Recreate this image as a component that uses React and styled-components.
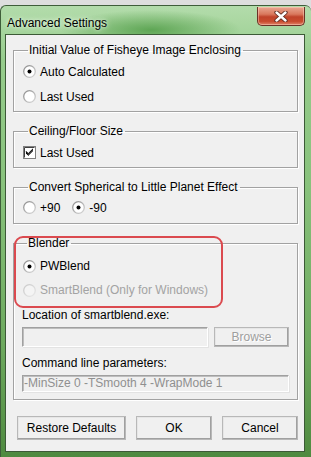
import React from "react";
import styled, { createGlobalStyle } from "styled-components";

const GlobalStyle = createGlobalStyle`
  html, body {
    margin: 0;
    padding: 0;
    background: #dedede;
  }
  body {
    font-family: "Liberation Sans", Arial, sans-serif;
    font-size: 12px;
    color: #000;
  }
`;

const Window = styled.div`
  box-sizing: border-box;
  width: 311px;
  height: 452px;
  margin-top: 5px;
  padding: 0 6px 5px 4px;
  display: flex;
  flex-direction: column;
  border: 1px solid #3f5e3a;
  border-bottom: none;
  border-right: none;
  border-radius: 6px 6px 0 0;
  background:
    radial-gradient(ellipse 90px 20px at 150px 24px, rgba(70, 150, 60, 0.75), rgba(70, 150, 60, 0) 100%),
    linear-gradient(to bottom, #b3dcab 0%, #96cc8c 12%, #88c27c 40%, #6da95e 75%, #4f8a40 100%);
`;

const TitleBar = styled.div`
  height: 28px;
  display: flex;
  justify-content: space-between;
  align-items: flex-start;
`;

const Title = styled.div`
  padding: 10px 0 0 2px;
  line-height: 14px;
  font-size: 12px;
  color: #000;
  text-shadow: 0 0 6px #e6f4e2, 0 0 3px #e6f4e2;
`;

const CloseButton = styled.div`
  box-sizing: border-box;
  margin-top: 1px;
  width: 48px;
  height: 19px;
  display: flex;
  align-items: center;
  justify-content: center;
  border: 1px solid #6b3226;
  border-top: none;
  border-radius: 0 0 5px 5px;
  background: linear-gradient(to bottom, #e9a893 0%, #d9785d 40%, #c0432a 55%, #c84c2e 80%, #e0856a 100%);
  box-shadow: inset 0 0 0 1px rgba(255, 220, 200, 0.45);
`;

const Client = styled.div`
  flex: 1;
  display: flex;
  flex-direction: column;
  background: #f0f0f0;
  border: 1px solid #3c5a37;
  padding: 8px 6px 0 7px;
`;

const GroupWrap = styled.div`
  position: relative;
  margin-top: ${(p) => p.$top || 0}px;
`;

const Group = styled.fieldset`
  margin: 0;
  padding: ${(p) => p.$pad || "2px 0 2px 9px"};
  border: 1px solid #a2a2a2;
  box-shadow: inset 1px 1px 0 #fff, 1px 1px 0 #fff;
  min-width: 0;
`;

const Legend = styled.legend`
  margin-left: 5px;
  padding: 0 2px 0 1px;
  line-height: 14px;
  color: #000;
`;

const Row = styled.div`
  display: flex;
  align-items: center;
  height: ${(p) => p.$h || 25}px;
  padding-top: ${(p) => p.$pt || 0}px;
  padding-left: ${(p) => p.$pl || 0}px;
  box-sizing: border-box;
`;

const Option = styled.label`
  display: flex;
  align-items: center;
  margin-right: ${(p) => p.$mr || 0}px;
  color: ${(p) => (p.$disabled ? "#a3a3a3" : "#000")};
`;

const Mark = styled.span`
  display: inline-flex;
  width: 13px;
  height: 13px;
  margin-right: 4px;
`;

const Caption = styled.div`
  line-height: 16px;
  margin-top: ${(p) => p.$top || 0}px;
`;

const FieldRow = styled.div`
  display: flex;
  gap: 6px;
  margin-top: 4px;
`;

const TextField = styled.div`
  box-sizing: border-box;
  flex: 1;
  height: ${(p) => p.$h || 20}px;
  margin-top: ${(p) => p.$top || 0}px;
  border: 1px solid;
  border-color: #a0a0a0 #fff #fff #a0a0a0;
  box-shadow: inset 1px 1px 0 #bdbdbd, 1px 1px 0 #e3e3e3;
  background: #f0f0f0;
  color: #8f8f8f;
  line-height: 14px;
  padding-left: 1px;
  white-space: nowrap;
  overflow: hidden;
`;

const Button = styled.div`
  box-sizing: border-box;
  width: ${(p) => p.$w}px;
  height: ${(p) => p.$h || 24}px;
  display: flex;
  align-items: center;
  justify-content: center;
  background: #f0f0f0;
  border: 1px solid;
  border-color: #fff #5c5c5c #5c5c5c #fff;
  box-shadow: inset -1px -1px 0 #a0a0a0, inset 1px 1px 0 #e6e6e6;
  outline: 1px solid #b8b8b8;
  outline-offset: -1px;
  color: ${(p) => (p.$disabled ? "#9e9e9e" : "#000")};
  text-shadow: ${(p) => (p.$disabled ? "1px 1px 0 #fff" : "none")};
`;

const ButtonBar = styled.div`
  display: flex;
  gap: 10px;
  margin: 16px 0 0 4px;
`;

const Highlight = styled.div`
  position: absolute;
  left: 1px;
  top: 0;
  width: 209px;
  height: 72px;
  box-sizing: border-box;
  border: 2px solid #db4a4f;
  border-radius: 9px;
  pointer-events: none;
`;

const Radio = ({ checked, disabled }) => (
  <Mark>
    <svg width="13" height="13" viewBox="0 0 13 13">
      <defs>
        <linearGradient id={disabled ? "rgd" : "rg"} x1="0" y1="0" x2="1" y2="1">
          <stop offset="0" stopColor={disabled ? "#c8c8c8" : "#8a8a8a"} />
          <stop offset="1" stopColor={disabled ? "#e8e8e8" : "#d8d8d8"} />
        </linearGradient>
      </defs>
      <circle cx="6.5" cy="6.5" r="5.8" fill={disabled ? "#f4f4f4" : "#fff"} stroke={`url(#${disabled ? "rgd" : "rg"})`} strokeWidth="1.3" />
      {checked && <circle cx="6.5" cy="6.5" r="2" fill="#000" />}
    </svg>
  </Mark>
);

const Check = () => (
  <Mark>
    <svg width="13" height="13" viewBox="0 0 13 13">
      <rect x="0.5" y="0.5" width="12" height="12" fill="#fff" stroke="#808080" />
      <path d="M1.5 1.5 H11.5" stroke="#404040" />
      <path d="M1.5 1.5 V11.5" stroke="#404040" />
      <path d="M3 6 L5.2 8.4 L10 3.6 M3 7 L5.2 9.4 L10 4.6 M3 5.2 L5.2 7.6 L10 2.8" stroke="#000" strokeWidth="1" fill="none" />
    </svg>
  </Mark>
);

const App = () => (
  <>
    <GlobalStyle />
    <Window>
      <TitleBar>
        <Title>Advanced Settings</Title>
        <CloseButton>
          <svg width="14" height="11" viewBox="0 0 14 11">
            <path d="M2.5 1.5 L11.5 9.5 M11.5 1.5 L2.5 9.5" stroke="#5a2a20" strokeWidth="4.2" strokeLinecap="round" />
            <path d="M2.5 1.5 L11.5 9.5 M11.5 1.5 L2.5 9.5" stroke="#fff" strokeWidth="2.4" strokeLinecap="round" />
          </svg>
        </CloseButton>
      </TitleBar>
      <Client>
        <GroupWrap>
          <Group>
            <Legend>Initial Value of Fisheye Image Enclosing</Legend>
            <Row>
              <Option><Radio checked />Auto Calculated</Option>
            </Row>
            <Row>
              <Option><Radio />Last Used</Option>
            </Row>
          </Group>
        </GroupWrap>

        <GroupWrap $top={12}>
          <Group>
            <Legend>Ceiling/Floor Size</Legend>
            <Row>
              <Option><Check />Last Used</Option>
            </Row>
          </Group>
        </GroupWrap>

        <GroupWrap $top={12}>
          <Group $pad="1px 0 3px 9px">
            <Legend>Convert Spherical to Little Planet Effect</Legend>
            <Row>
              <Option $mr={12}><Radio />+90</Option>
              <Option><Radio checked />-90</Option>
            </Row>
          </Group>
        </GroupWrap>

        <GroupWrap $top={12}>
          <Group $pad="0 8px 7px 8px">
            <Legend>Blender</Legend>
            <Row $h={28} $pt={4} $pl={1}>
              <Option><Radio checked />PWBlend</Option>
            </Row>
            <Row $h={24} $pl={1}>
              <Option $disabled><Radio disabled />SmartBlend (Only for Windows)</Option>
            </Row>
            <Caption $top={5}>Location of smartblend.exe:</Caption>
            <FieldRow>
              <TextField />
              <Button $w={75} $h={20} $disabled>Browse</Button>
            </FieldRow>
            <Caption $top={8}>Command line parameters:</Caption>
            <TextField $h={17} $top={4}>-MinSize 0 -TSmooth 4 -WrapMode 1</TextField>
          </Group>
          <Highlight />
        </GroupWrap>

        <ButtonBar>
          <Button $w={109}>Restore Defaults</Button>
          <Button $w={76}>OK</Button>
          <Button $w={76}>Cancel</Button>
        </ButtonBar>
      </Client>
    </Window>
  </>
);

export default App;
